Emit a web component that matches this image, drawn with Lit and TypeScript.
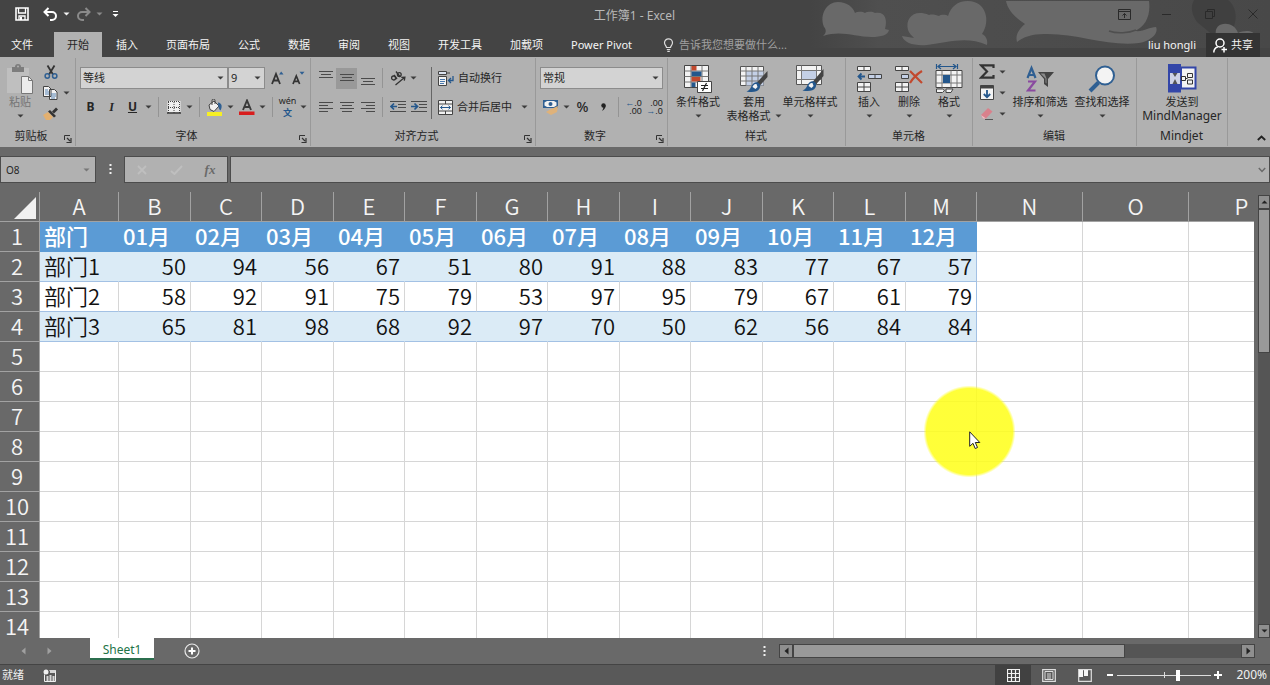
import { LitElement, html, svg, css, nothing, TemplateResult, SVGTemplateResult } from "lit";
import { customElement, state } from "lit/decorators.js";
import { classMap } from "lit/directives/class-map.js";
import { styleMap } from "lit/directives/style-map.js";

const icon = (w: number, h: number, body: SVGTemplateResult, cls = "") =>
  html`<svg class=${cls} width=${w} height=${h} viewBox="0 0 ${w} ${h}" aria-hidden="true">${body}</svg>`;

const caret = (cls = "") => icon(7, 4, svg`<path d="M0.5 0.5h6L3.5 3.6z" fill="currentColor"/>`, cls);

const lines = (spec: number[][], color = "#4a4a4a") =>
  svg`<g stroke=${color} stroke-width="1">${spec.map(
    ([x1, x2, y]) => svg`<path d="M${x1} ${y + 0.5}H${x2}"/>`
  )}</g>`;

const I = {
  save: icon(14, 14, svg`<path d="M1 1h12v12H1z" fill="none" stroke="#fff" stroke-width="1.6"/><path d="M3.5 1v5h7V1M4 13V9h6v4" fill="none" stroke="#fff" stroke-width="1.3"/><path d="M5 10h2v3H5z" fill="#fff"/>`),
  undo: icon(15, 14, svg`<path d="M5.5 1L1.5 5l4 4M2 5h7a4 4 0 0 1 0 8H7" fill="none" stroke="#fff" stroke-width="2"/>`),
  redo: icon(15, 14, svg`<path d="M9.500 1l4 4-4 4M13 5H6a4 4 0 0 0 0 8h2" fill="none" stroke="#8a8a8a" stroke-width="2"/>`),
  customize: icon(7, 8, svg`<path d="M1 1.500h5" stroke="#fff"/><path d="M0.500 4h6l-3 3z" fill="#fff"/>`),
  ribbonOpts: icon(13, 11, svg`<path d="M.5.5h12v10H.5zM.5 2.500h12" fill="none" stroke="#2a2a2a"/><path d="M6.500 9V4.500M4.500 6.500l2-2 2 2" fill="none" stroke="#2a2a2a"/>`),
  min: icon(10, 10, svg`<path d="M0 5.500h9" stroke="#2a2a2a"/>`),
  restore: icon(10, 10, svg`<path d="M.5 2.500h7v7h-7zM2.500 2.500v-2h7v7h-2" fill="none" stroke="#2a2a2a"/>`),
  close: icon(10, 10, svg`<path d="M.5.5l9 9M9.500.5l-9 9" stroke="#2a2a2a"/>`),
  bulb: icon(11, 14, svg`<path d="M3.500 9.500C3.500 8 1.500 7 1.500 4.800a4 4 0 0 1 8 0C9.500 7 7.500 8 7.500 9.500zM3.800 11.500h3.500M4.300 13.300h2.500" fill="none" stroke="#ddd" stroke-width="1.200"/>`),
  person: icon(14, 15, svg`<circle cx="7" cy="5" r="4" fill="none" stroke="#fff" stroke-width="1.500"/><path d="M.8 14.500c0-3 1.500-5 4-5.600M8.500 11.500h5.500M11 9v5.500" fill="none" stroke="#fff" stroke-width="1.500"/>`),
  paste: icon(28, 32, svg`<path d="M1 5h22v25H1z" fill="#bfbfbf"/><path d="M6 4h3a3 3 0 0 1 6 0h3v5H6z" fill="#7d7d7d"/><circle cx="12" cy="3.500" r="1" fill="#b1b1b1"/><path d="M15.500 13.500h7l4 4v13h-11z" fill="#ececec" stroke="#777"/><path d="M22.500 13.500v4h4" fill="none" stroke="#777"/>`),
  cut: icon(14, 14, svg`<path d="M3.500.5l5.500 9M10.500.5L5 9.500" stroke="#333" stroke-width="1.800"/><circle cx="3.300" cy="11" r="2.200" fill="none" stroke="#2f5f92" stroke-width="1.500"/><circle cx="10.700" cy="11" r="2.200" fill="none" stroke="#2f5f92" stroke-width="1.500"/>`),
  copy: icon(15, 14, svg`<path d="M.5.5h5l2.500 2.500v7.500H.5zM6.500 3.500h5l2.500 2.500v7.500H6.500z" fill="#f3f3f3" stroke="#444"/><path d="M2 4h3M2 6h4M2 8h4M8 8h5M8 10h5M8 12h4" stroke="#4878ad" stroke-width=".9"/>`),
  brush: icon(15, 13, svg`<path d="M0 8l5-3 5 5-3 3H3z" fill="#e3b070"/><path d="M5 4.500l2-1.500 6 6-2 1.500z" fill="#333"/><path d="M9 4.500L13 .5l2 2-4 4z" fill="#333"/>`),
  growA: icon(13, 14, svg`<path d="M1 13L5 3l4 10M2.400 9.500h5.200" fill="none" stroke="#333" stroke-width="1.800"/><path d="M8 3.500l2.200-3 2.300 3z" fill="#2f5f92"/>`),
  shrinkA: icon(13, 14, svg`<path d="M1 13l3.300-8L7.600 13M2.200 10.300h4.200" fill="none" stroke="#333" stroke-width="1.700"/><path d="M7.500.8h5l-2.500 3z" fill="#2f5f92"/>`),
  borders: icon(14, 13, svg`<path d="M.5 0h13v12.500H.5z" fill="#efefef"/><path d="M1 .5h12M1 6.500h12M1.500 1v11M7 1v11M12.500 1v11" stroke="#444" stroke-dasharray="1 1" fill="none"/><path d="M0 12h14" stroke="#333" stroke-width="1.500"/>`),
  fill: icon(17, 17, svg`<path d="M3 6l5-4 5 5-5 5.500-4-2z" fill="#f1f1f1" stroke="#444"/><path d="M6 6V1.500a1.500 1.500 0 0 1 3 0V5" fill="none" stroke="#444"/><path d="M12 3.500c4 .5 4.500 4 2.500 8-1.500-1-2.500-4-2.500-8z" fill="#2f5f92"/><path d="M1 13h15v4H1z" fill="#f6ef24"/>`),
  fontColor: icon(16, 16, svg`<path d="M4 11L8 1.500 12 11M5.400 8h5.200" fill="none" stroke="#3a3a3a" stroke-width="1.900"/><path d="M0 12.500h15.500v3.500H0z" fill="#d81e1e"/>`),
  aTop: icon(14, 14, lines([[0, 14, 0], [2, 12, 3], [0, 14, 6]])),
  aMid: icon(14, 14, lines([[0, 14, 3], [2, 12, 6], [0, 14, 9]])),
  aBot: icon(14, 14, lines([[0, 14, 7], [2, 12, 10], [0, 14, 13]])),
  aLeft: icon(14, 12, lines([[0, 14, 1], [0, 9, 4], [0, 14, 7], [0, 9, 10]])),
  aCenter: icon(14, 12, lines([[0, 14, 1], [2, 12, 4], [0, 14, 7], [2, 12, 10]])),
  aRight: icon(14, 12, lines([[0, 14, 1], [5, 14, 4], [0, 14, 7], [5, 14, 10]])),
  orient: icon(16, 15, svg`<g fill="none" stroke="#333" stroke-width="1.300"><circle cx="3.600" cy="7" r="2"/><path d="M4 4l3 4M6 .5l4.200 5.500"/><circle cx="9.300" cy="3.500" r="1.900"/><path d="M5.500 14l9-7.500M11.300 6.300l3.600-.2-.6 3.600"/></g>`),
  outdent: icon(16, 12, svg`${lines([[0, 16, 0], [8, 16, 3], [8, 16, 6], [0, 16, 10]])}<path d="M7 5.500H1.500M4 2.500L1 5.500l3 3" fill="none" stroke="#24578c" stroke-width="1.700"/>`),
  indent: icon(16, 12, svg`${lines([[0, 16, 0], [8, 16, 3], [8, 16, 6], [0, 16, 10]])}<path d="M0 5.500h5.500M3.500 2.500l3 3-3 3" fill="none" stroke="#24578c" stroke-width="1.700"/>`),
  wrap: icon(16, 15, svg`<path d="M.5.5h8v3h-8z" fill="#dbe3f0" stroke="#444"/><path d="M9 2h3" stroke="#444"/><path d="M.5 5.500h8v9h-8z" fill="#f3f3f3" stroke="#444"/><path d="M2 8.500h5M2 10.500h5M2 12.500h4" stroke="#4878ad"/><path d="M15 5v4.500h-4M13 7l-2.500 2.500L13 12" fill="none" stroke="#24578c" stroke-width="1.300"/>`),
  merge: icon(15, 15, svg`<path d="M.5.5h14v14H.5z" fill="#f3f3f3" stroke="#444"/><path d="M.5 4h14M.5 11h14M7.500.5V4M7.500 11v3.500" fill="none" stroke="#444"/><path d="M2.500 7.500h10M4.500 5.700L2.500 7.500l2 1.800M10.500 5.700l2 1.800-2 1.800" fill="none" stroke="#24578c"/>`),
  money: icon(16, 16, svg`<path d="M0 1h15v8H0z" fill="#2f5f92"/><path d="M1.500 3.500L4 2h7l2.500 1.500v3L11 8H4L1.500 6.500z" fill="#f1f1f1"/><circle cx="7.500" cy="5" r="2" fill="#2f5f92"/><path d="M3 13l5-3 7-3-1 6-6 3z" fill="#dfb27a"/>`),
  cond: icon(28, 28, svg`<path d="M.5.5h24v22H.5z" fill="#f3f3f3" stroke="#444"/><path d="M.5 6h24M.5 11.500h24M.5 17h24M7 .5v22M18 .5v22" stroke="#777"/><path d="M7.500 1h5v4.500h-5zM7.500 12h9v4.500h-9z" fill="#c2492e"/><path d="M7.500 6.500h10V11h-10zM7.500 17.500h4V22h-4z" fill="#24578c"/><path d="M13.500 16.500h14v11h-14z" fill="#fff" stroke="#444"/><path d="M17 20.500h7M17 23.500h7M22.500 18l-4 8" stroke="#222" stroke-width="1.200"/>`),
  tableFmt: icon(28, 28, svg`<path d="M.5 1.500h23v19H.5z" fill="#f3f3f3" stroke="#555"/><path d="M6 6h17.500v14.500H6z" fill="#c4d0e6"/><path d="M.5 6h23M.5 11h23M.5 16h23M6 1.500v19M12 1.500v19M18 1.500v19" stroke="#777"/><path d="M27.500 6v6l-8 9-3-3z" fill="#444"/><path d="M18 17.500c2 1 3 3 1.500 6-2 4-8 4-13 3 3-1 4-3 5-5.500 1.500-3 4-4.500 6.500-3.500z" fill="#24578c"/><path d="M12.500 22c.5-2 2-3.500 4-3l1 3-2 2z" fill="#f3f3f3"/>`),
  cellStyle: icon(28, 28, svg`<path d="M.5.500h25v19H.5z" fill="#f3f3f3" stroke="#555"/><path d="M.5 5.500h25M.5 14.500h25M5.500.500v19M20.500.500v19" stroke="#777"/><path d="M6 6h14v8H6z" fill="#c4d0e6"/><path d="M27.500 4v7l-8 9-3-3z" fill="#444"/><path d="M18 16.500c2 1 3 3 1.500 6-2 4-8 4-13 3 3-1 4-3 5-5.500 1.500-3 4-4.500 6.500-3.500z" fill="#24578c"/><path d="M12.500 21c.5-2 2-3.500 4-3l1 3-2 2z" fill="#f3f3f3"/>`),
  insert: icon(26, 28, svg`<g stroke="#444" fill="#f3f3f3"><path d="M1.500 1.500h13v4h-13zM8 1.500v4"/><path d="M12.500 9.500h13v4h-13z" fill="#c4d0e6"/><path d="M19 9.500v4"/><path d="M1.500 17.500h13v9h-13zM8 17.500v9M1.500 22h13"/></g><path d="M9 11.500H3M5.500 8.500l-3 3 3 3" fill="none" stroke="#24578c" stroke-width="1.800"/>`),
  del: icon(28, 28, svg`<g stroke="#444" fill="#f3f3f3"><path d="M.5 1.500h13v4H.5zM7 1.500v4"/><path d="M6.500 9.500h7v4h-7z" fill="#c4d0e6"/><path d="M.5 17.500h13v9H.5zM7 17.500v9M.5 22h13"/></g><path d="M15 6l12 12M27 6c-5 3-9 7-12 12" fill="none" stroke="#c2492e" stroke-width="2.200"/>`),
  format: icon(28, 29, svg`<path d="M1.500 0v5M22.500 0v5M3 2.500h18M6 0L3 2.500 6 5M18 0l3 2.500L18 5" fill="none" stroke="#24578c" stroke-width="1.200"/><path d="M1 6.500h26v17H1z" fill="#f3f3f3" stroke="#444"/><path d="M1 11h26M1 19h26M7 6.500v17M16 6.500v17M22 6.500v17" stroke="#777"/><path d="M8 11h7v8H8z" fill="#24578c"/><path d="M1.500 25h6l2 1.500-2 2h-6zM11 25h7l-2 3.500h-5z" fill="#f3f3f3" stroke="#444"/>`),
  sigma: icon(16, 15, svg`<path d="M14.500 4V1.300H2L8 7.500 2 13.700h12.500V11" fill="none" stroke="#333" stroke-width="2.200"/>`),
  fillDown: icon(14, 15, svg`<path d="M.5.500h13v14H.5z" fill="#f3f3f3" stroke="#444"/><path d="M.5.500h13v3H.5z" fill="#444"/><path d="M7 5v7M3.800 9L7 12.200 10.200 9" fill="none" stroke="#24578c" stroke-width="1.800"/>`),
  eraser: icon(14, 14, svg`<path d="M1 8L8 1l4.500 3.500L6 11.500H3z" fill="#d9818c"/><path d="M1 8l5 3.500H3z" fill="#ecc0c4"/><path d="M5 12.500h8" stroke="#555"/>`),
  sort: icon(28, 28, svg`<g fill="none" stroke-width="2.200"><path d="M1.500 13L5.500 3l4 10M3 10h5" stroke="#2f5f92"/><path d="M2 16.500h7L2 25.500h7.500" stroke="#8a4aa0"/></g><path d="M12 7h16l-6 7v8l-4-3v-5z" fill="#444"/><path d="M14.500 8.500h4l2 5v5l-1-1v-4z" fill="#8a8a8a"/>`),
  find: icon(28, 28, svg`<circle cx="17" cy="10.500" r="9" fill="#f3f3f3" stroke="#2f5f92" stroke-width="2"/><path d="M10.500 17.500L2 26" stroke="#2f5f92" stroke-width="4"/>`),
  mind: icon(30, 29, svg`<path d="M14 3.500h14.500v21H14z" fill="#f3f3f3" stroke="#3346a8" stroke-width="2"/><path d="M1 0h13v28.500H1z" fill="#3346a8"/><path d="M3 9h10v11H3z" fill="#cfd3e6"/><path d="M5.500 9l2.500 4 2.500-4zM5.500 20l2.500-5 2.500 5z" fill="#555"/><g fill="none" stroke="#333"><path d="M14.500 12.500h4v4h-4zM20.500 9.500h5v4h-5zM20.500 16h5v4h-5zM18.500 14.500h2"/></g>`),
  launcher: icon(8, 8, svg`<path d="M.5 5V.5H6" fill="none" stroke="#333"/><path d="M3 3l3 3M7 3v4.500H2.500" fill="none" stroke="#333" stroke-width="1.200"/>`),
  up: icon(9, 6, svg`<path d="M.8 5l3.700-3.500L8.200 5" fill="none" stroke="#222" stroke-width="1.800"/>`),
  down: icon(8, 6, svg`<path d="M.8 1L4 4.500 7.200 1" fill="none" stroke="#6a6a6a" stroke-width="1.500"/>`),
  cancel: icon(10, 10, svg`<path d="M1 1l8 8M9 1L1 9" stroke="#bfbfbf" stroke-width="1.800"/>`),
  check: icon(13, 10, svg`<path d="M1 6l3.500 3L12 1" fill="none" stroke="#bfbfbf" stroke-width="1.900"/>`),
  dots: icon(3, 11, svg`<path d="M.5 0h2v2h-2zM.5 4h2v2h-2zM.5 8h2v2h-2z" fill="#f1f1f1"/>`),
  triL: icon(5, 8, svg`<path d="M4.500.5v7L.5 4z" fill="currentColor"/>`),
  triR: icon(5, 8, svg`<path d="M.5.500v7l4-3.500z" fill="currentColor"/>`),
  triU: icon(7, 4, svg`<path d="M.5 3.600h6L3.500.4z" fill="currentColor"/>`),
  add: icon(16, 16, svg`<circle cx="8" cy="8" r="7" fill="none" stroke="#e8e8e8" stroke-width="1.200"/><path d="M4.500 8h7M8 4.500v7" stroke="#fff" stroke-width="2"/>`),
  macro: icon(13, 13, svg`<path d="M1.500 5.500v7h11v-11h-6" fill="none" stroke="#f1f1f1"/><circle cx="3" cy="3" r="2.500" fill="#f1f1f1"/><path d="M7 1h5.500v3H7zM3.500 7h2v5h-2zM6.500 6h2v6h-2zM9.500 7h2v5h-2z" fill="#d5d5d5"/>`),
  vNormal: icon(13, 13, svg`<path d="M.5.500h12v12H.5zM.5 4.500h12M.5 8.500h12M4.500.5v12M8.500.5v12" fill="none" stroke="#f1f1f1" stroke-width="1.200"/>`),
  vPage: icon(14, 13, svg`<path d="M.7.7h12.600v11.600H.7z" fill="none" stroke="#ddd" stroke-width="1.200"/><path d="M3 2.500h8v8H3zM5 5h4M5 7h4M5 9h4" fill="none" stroke="#ddd"/>`),
  vBreak: icon(14, 13, svg`<path d="M.7.7h12.600v11.600H.7z" fill="none" stroke="#ddd" stroke-width="1.200"/><path d="M1 1h4v7H1zM6 1h4v6H6z" fill="#f6f6f6"/>`),
};

const TABS = ["文件", "开始", "插入", "页面布局", "公式", "数据", "审阅", "视图", "开发工具", "加载项", "Power Pivot"];
const COLS = "ABCDEFGHIJKLMNOP".split("");
const HEAD = ["部门", ...Array.from({ length: 12 }, (_, i) => `${String(i + 1).padStart(2, "0")}月`)];
const DATA: (string | number)[][] = [
  ["部门1", 50, 94, 56, 67, 51, 80, 91, 88, 83, 77, 67, 57],
  ["部门2", 58, 92, 91, 75, 79, 53, 97, 95, 79, 67, 61, 79],
  ["部门3", 65, 81, 98, 68, 92, 97, 70, 50, 62, 56, 84, 84],
];
const colWidth = (i: number) => (i === 0 ? 79 : i > 12 ? 106 : i % 2 ? 72 : 71);

@customElement("sheet-grid")
class SheetGrid extends LitElement {
  static styles = css`
    :host { display: block; overflow: hidden; background: #fff; font-family: "Noto Sans CJK SC", sans-serif; }
    table { table-layout: fixed; width: 0; border-collapse: separate; border-spacing: 0; font-size: 22px; line-height: 26px; color: #111; }
    th, td { box-sizing: border-box; height: 30px; padding: 0 4px 3px; white-space: nowrap; border-right: 1px solid #d6d6d6; border-bottom: 1px solid #d6d6d6; font-weight: 350; }
    .head { background: #696969; color: #f4f4f4; border-color: #a2a2a2; text-align: center; }
    .rowhead { padding: 0 5px 3px 0; }
    .corner { padding: 0 3px 1px 0; line-height: 0; vertical-align: bottom; }
    .corner svg { display: block; margin-left: auto; }
    .title { background: #5b9bd5; border-color: #5b9bd5; color: #fff; font-weight: 500; text-align: left; }
    .num { text-align: right; }
    .data { border-bottom-color: #a3c1e4; }
    .band { background: #dbebf6; border-right-color: #dbebf6; }
    .data.last { border-right-color: #a3c1e4; }
  `;
  private cell(r: number, c: number) {
    if (c > 12 || r > 3) return html`<td></td>`;
    if (r === 0) return html`<th class="title" scope="col">${HEAD[c]}</th>`;
    return html`<td class=${classMap({ data: true, band: r % 2 === 1, num: c > 0, last: c === 12 })}>${DATA[r - 1][c]}</td>`;
  }
  render() {
    return html`<table aria-label="Sheet1">
      <colgroup>
        <col style="width:40px" />
        ${COLS.map((_, i) => html`<col style=${styleMap({ width: `${colWidth(i)}px` })} />`)}
      </colgroup>
      <thead>
        <tr>
          <th class="head corner">${icon(22, 23, svg`<path d="M22 0v22H0z" fill="#f1f1f1"/>`)}</th>
          ${COLS.map((c) => html`<th class="head" scope="col">${c}</th>`)}
        </tr>
      </thead>
      <tbody>
        ${Array.from({ length: 14 }, (_, r) => html`<tr>
          <th class="head rowhead" scope="row">${r + 1}</th>
          ${COLS.map((_, c) => this.cell(r, c))}
        </tr>`)}
      </tbody>
    </table>`;
  }
}

@customElement("app-root")
class AppRoot extends LitElement {
  @state() private active = 1;

  static styles = css`
    :host { display: flex; flex-direction: column; height: 100vh; overflow: hidden; background: #696969; font: 11px/14px "Noto Sans", "Noto Sans CJK SC", sans-serif; color: #262626; }
    * { box-sizing: border-box; }
    svg { display: block; flex: none; }
    button, input, select { font: inherit; color: inherit; margin: 0; padding: 0; border: 0; border-radius: 0; background: none; outline: none; }
    button { display: flex; align-items: center; justify-content: center; white-space: nowrap; }
    .latin { font-size: 12px; }

    .top { position: relative; background: #444; color: #f4f4f4; }
    .clouds { position: absolute; top: 0; right: 0; }
    .titlebar { position: relative; display: grid; grid-template-columns: 1fr auto 1fr; align-items: center; height: 32px; padding: 0 9px 4px 12px; }
    .quick { display: flex; align-items: center; }
    .quick .tool { width: 20px; height: 24px; }
    .quick .drop { width: 13px; height: 24px; }
    .quick .save { margin-right: 8px; }
    .quick .more { width: 18px; height: 28px; }
    .dim { color: #8a8a8a; }
    .title { padding: 4px 4px 0 0; font-size: 12px; color: #b9b9b9; }
    .win { display: flex; justify-content: flex-end; gap: 27px; }
    .win button { width: 16px; height: 24px; }
    .tabs { position: relative; display: flex; height: 25px; }
    .tab { padding: 0 14px; }
    .tab:first-child { padding: 0 21px 0 11px; }
    .tab.on { background: #b1b1b1; color: #262626; padding: 0 13px; }
    .tell { display: flex; align-items: center; flex: 1; gap: 5px; margin-left: 17px; }
    .tell input { width: 160px; }
    .tell input::placeholder { color: #a0a0a0; opacity: 1; }
    .user { padding: 0 10px; }
    .share { gap: 4px; margin: 1px 10px 0 0; padding: 0 7px; background: #333; }

    .ribbon { display: flex; height: 90px; padding: 1px 0 1px; background: #b1b1b1; }
    .ribbon svg { color: #3c3c3c; }
    .group { display: flex; flex-direction: column; border-right: 1px solid #999; flex: none; }
    .body { flex: 1; display: flex; }
    .foot { display: flex; align-items: center; height: 20px; padding-right: 1px; }
    .foot span { flex: 1; text-align: center; }
    .foot button { width: 12px; height: 14px; align-items: end; }
    .g-clip { width: 76px; } .g-font { width: 235px; } .g-align { width: 225px; } .g-num { width: 132px; }
    .g-style { width: 178px; } .g-cell { width: 127px; } .g-edit { width: 164px; } .g-mind { width: 91px; }
    .rows { display: flex; flex-direction: column; gap: 5px; padding: 8px 0 0 4px; }
    .plain { padding-left: 0; }
    .row { display: flex; align-items: center; height: 24px; }
    .b { width: 21px; height: 21px; flex: none; }
    .b.on { background: #999; }
    .d { width: 11px; height: 21px; flex: none; }
    .sep { width: 1px; height: 20px; margin: 0 4px; background: #949494; flex: none; }
    .tall { width: 1px; height: 52px; margin: 9px 6px 0 2px; background: #666; }
    .stack { display: flex; flex-direction: column; padding-top: 3px; }
    .line { display: flex; height: 21px; }
    .big { flex-direction: column; justify-content: flex-start; padding-top: 4px; height: 68px; flex: none; }
    .big .pic { height: 33px; display: flex; align-items: center; }
    .big .cap { height: 14px; font-size: 11px; }
    .big .sub { height: 14px; display: flex; align-items: center; gap: 4px; }
    .grey { color: #757575; }
    .w40 { width: 40px; } .w60 { width: 60px; } .w90 { width: 90px; } .w52 { width: 52px; }
    .pad { padding-left: 3px; }
    .spread { gap: 2px; }
    .bold { font: 700 12px/14px "Noto Sans", sans-serif; }
    .ital { font: italic 700 12px/14px "Liberation Serif", serif; }
    .under { font: 700 12px/14px "Noto Sans", sans-serif; text-decoration: underline; }
    .pct { font: 500 14px/14px "Noto Sans", sans-serif; }
    .wen { display: flex; flex-direction: column; align-items: center; font-size: 9px; line-height: 12px; }
    .wen b { color: #24578c; }
    .dec { font: 9px/8px "Liberation Sans", sans-serif; text-align: right; color: #222; }
    .dec i { color: #24578c; font-style: normal; }
    .text { gap: 4px; height: 21px; }
    .after { margin-left: 7px; }
    .pick { display: grid; align-items: center; height: 22px; background: #d3d3d3; border: 1px solid #8c8c8c; }
    .pick select, .pick svg { grid-area: 1 / 1; }
    .pick select { appearance: none; width: 100%; height: 20px; padding-left: 2px; }
    .pick svg { justify-self: end; margin-right: 3px; pointer-events: none; }
    .p-font { width: 148px; } .p-size { width: 37px; margin-right: 2px; } .p-num { width: 123px; }
    .fold { flex: 1; display: flex; justify-content: flex-end; align-items: flex-end; padding: 0 4px 5px; }

    .formula { display: flex; align-items: stretch; height: 45px; padding: 9px 0; }
    .box { display: flex; align-items: center; background: #b1b1b1; border: 1px solid #4c4c4c; }
    .namebox { width: 96px; padding: 0 5px; color: #777; }
    .namebox input { flex: 1; min-width: 0; color: #262626; font-size: 10px; }
    .handle { display: flex; align-items: center; justify-content: center; width: 28px; }
    .acts { width: 104px; }
    .acts button { flex: 1; height: 24px; }
    .fx { font: italic 700 13px/16px "Liberation Serif", serif; color: #6a6a6a; }
    .entry { flex: 1; margin-left: 2px; padding-right: 3px; }
    .entry input { flex: 1; height: 24px; padding: 0 6px; }

    .work { position: relative; flex: 1; min-height: 0; display: flex; }
    sheet-grid { flex: 1; min-width: 0; }
    .spot { position: absolute; left: 924px; top: 194px; width: 91px; height: 91px; background: radial-gradient(circle, rgba(255, 255, 24, 0.86) 0 43px, rgba(255, 255, 24, 0) 46px); pointer-events: none; }
    .pointer { position: absolute; left: 969px; top: 239px; }
    .vbar { width: 16px; display: flex; flex-direction: column; padding: 3px 0 0 4px; background: #696969; }
    .vbar button, .hbar button { background: #8f8f8f; border: 1px solid #444; width: 14px; height: 14px; flex: none; color: #222; }
    .vbar button { width: 12px; }
    .vtrack { flex: 1; background: #555; }
    .vthumb { height: 144px; background: #999; border: 1px solid #444; }

    .sheets { display: flex; align-items: center; height: 26px; padding-right: 15px; color: #a0a0a0; }
    .sheets .nav { width: 26px; height: 20px; }
    .sheets .nav:first-child { margin-left: 10px; }
    .sheet { align-self: flex-start; width: 64px; height: 22px; margin: 0 30px 0 28px; padding-top: 3px; background: #fff; color: #217346; border-bottom: 2px solid #2b6e4e; font-size: 12px; }
    .space { flex: 1; }
    .hbar { display: flex; width: 476px; height: 14px; margin-left: 13px; }
    .htrack { flex: 1; background: #555; }
    .hthumb { width: 74%; height: 14px; background: #999; border: 1px solid #444; }

    .status { display: flex; align-items: center; height: 21px; background: #595959; border-top: 1px solid #444; color: #f1f1f1; padding: 0 3px 0 2px; }
    .status .mac { margin-left: 15px; width: 20px; }
    .views { display: flex; }
    .views button { width: 36px; height: 20px; }
    .views .on { background: #414141; }
    .zoom { display: flex; align-items: center; }
    .zoom button { width: 14px; height: 20px; }
    .zoom input { appearance: none; width: 94px; height: 12px; background: linear-gradient(#ddd, #ddd) 47px 3px / 1px 6px no-repeat, linear-gradient(#ddd, #ddd) 0 6px / 100% 1px no-repeat; }
    .zoom input::-webkit-slider-thumb { appearance: none; width: 4px; height: 11px; background: #fff; }
    .level { width: 42px; text-align: right; }
  `;

  private small(label: string, body: unknown, cls = "") {
    return html`<button class="b ${cls}" aria-label=${label}>${body}</button>`;
  }
  private drop(label: string, cls = "d") {
    return html`<button class=${cls} aria-label=${label}>${caret()}</button>`;
  }
  private big(pic: TemplateResult, cap: string, width: string, sub: unknown = "", arrow = true) {
    return html`<button class="big ${width}"><span class="pic">${pic}</span><span class="cap">${cap}</span><span class="sub">${sub}${arrow ? caret() : nothing}</span></button>`;
  }
  private group(cls: string, name: string, body: TemplateResult, launch = false) {
    return html`<section class="group ${cls}" aria-label=${name}>
      <div class="body">${body}</div>
      <div class="foot"><span>${name}</span>${launch ? html`<button aria-label="${name}设置">${I.launcher}</button>` : nothing}</div>
    </section>`;
  }
  private pick(cls: string, label: string, options: string[]) {
    return html`<span class="pick ${cls}"><select aria-label=${label}>${options.map((o) => html`<option>${o}</option>`)}</select>${caret()}</span>`;
  }

  private header() {
    return html`<header class="top">
      <svg class="clouds" width="460" height="57" viewBox="0 0 460 57" aria-hidden="true">
        <defs><linearGradient id="shade"><stop offset="0" stop-color="#4d4d4d" stop-opacity="0"/><stop offset=".15" stop-color="#4f4f4f"/><stop offset="1" stop-color="#484848"/></linearGradient></defs>
        <path d="M0 0h460v48H0z" fill="url(#shade)"/>
        <path d="M384 0h34c10 8 9 22 4 30l-18 6-17-14c-5-7-7-15-3-22z" fill="#404040"/>
        <g fill="#696969">
          <path d="M13 36c4-3 3-7 1-9C9 14 17 2 28 2c9 0 15 5 17 11 4-2 8-1 10 0 4-2 8-1 10 0 9-2 13 5 10 16l4 1c-1 5-8 7-17 7-18 0-30-7-49-1z"/>
          <path d="M177 45c1-5-1-9-5-11 9-13 4-33-14-33-11 0-17 6-20 15-3-2-8-1-9 0-3-1-7-2-10-1C104 9 95 18 98 30c1 3 4 6 6 8l-12-2c2 7 12 10 25 9 22-3 40-9 60 0z"/>
          <path d="M196 1h143c2 15-4 26-14 30 9 1 14-4 21-4 3 6-5 14-17 16-30 4-62-10-95-9-12 0-21 3-27 8-2-7 2-13 8-18-9-6-17-13-19-23z"/>
          <path d="M406 35c-3-14 18-15 22-2 7-3 16-3 18 4l-8 6h-28z"/>
        </g>
        <path d="M299 31c8 3 20 2 27-1" fill="none" stroke="#4f4f4f" stroke-width="1.500"/>
      </svg>
      <div class="titlebar">
        <div class="quick">
          <button class="tool save" aria-label="保存">${I.save}</button>
          <button class="tool" aria-label="撤消">${I.undo}</button>${this.drop("撤消选项", "drop")}
          <button class="tool dim" aria-label="恢复">${I.redo}</button>${this.drop("恢复选项", "drop dim")}
          <button class="more" aria-label="自定义快速访问工具栏">${I.customize}</button>
        </div>
        <div class="title">工作簿1 - Excel</div>
        <div class="win">
          <button aria-label="功能区显示选项">${I.ribbonOpts}</button><button aria-label="最小化">${I.min}</button>
          <button aria-label="还原">${I.restore}</button><button aria-label="关闭">${I.close}</button>
        </div>
      </div>
      <nav class="tabs">
        ${TABS.map((t, i) => html`<button class="tab ${i === this.active ? "on" : ""}" @click=${() => (this.active = i)}>${t}</button>`)}
        <label class="tell">${I.bulb}<input aria-label="告诉我您想要做什么" placeholder="告诉我您想要做什么..." /></label>
        <button class="user">liu hongli</button>
        <button class="share">${I.person}共享</button>
      </nav>
    </header>`;
  }

  private ribbon() {
    return html`<div class="ribbon">
      ${this.group("g-clip", "剪贴板", html`
        <button class="big w40 grey"><span class="pic">${I.paste}</span><span class="cap">粘贴</span><span class="sub">${caret()}</span></button>
        <div class="stack">
          <div class="line">${this.small("剪切", I.cut)}</div>
          <div class="line">${this.small("复制", I.copy)}${this.drop("复制选项")}</div>
          <div class="line">${this.small("格式刷", I.brush)}</div>
        </div>`, true)}
      ${this.group("g-font", "字体", html`<div class="rows">
          <div class="row">${this.pick("p-font", "字体", ["等线", "宋体"])}${this.pick("p-size", "字号", ["9", "10", "11"])}${this.small("增大字号", I.growA)}${this.small("减小字号", I.shrinkA)}</div>
          <div class="row">
            ${this.small("加粗", "B", "bold")}${this.small("倾斜", "I", "ital")}${this.small("下划线", "U", "under")}${this.drop("下划线选项")}
            <i class="sep"></i>${this.small("边框", I.borders)}${this.drop("边框选项")}
            <i class="sep"></i>${this.small("填充颜色", I.fill)}${this.drop("填充选项")}${this.small("字体颜色", I.fontColor)}${this.drop("颜色选项")}
            <i class="sep"></i>${this.small("拼音", html`<span class="wen">wén<b>文</b></span>`)}${this.drop("拼音选项")}
          </div>
        </div>`, true)}
      ${this.group("g-align", "对齐方式", html`
        <div class="rows">
          <div class="row">${this.small("顶端对齐", I.aTop)}${this.small("垂直居中", I.aMid, "on")}${this.small("底端对齐", I.aBot)}<i class="sep"></i>${this.small("方向", I.orient)}${this.drop("方向选项")}</div>
          <div class="row">${this.small("左对齐", I.aLeft)}${this.small("居中", I.aCenter)}${this.small("右对齐", I.aRight)}<i class="sep"></i>${this.small("减少缩进", I.outdent)}${this.small("增加缩进", I.indent)}</div>
        </div>
        <i class="tall"></i>
        <div class="rows plain">
          <div class="row"><button class="text">${I.wrap}自动换行</button></div>
          <div class="row"><button class="text">${I.merge}合并后居中</button>${this.drop("合并选项", "d after")}</div>
        </div>`, true)}
      ${this.group("g-num", "数字", html`<div class="rows">
          <div class="row">${this.pick("p-num", "数字格式", ["常规", "数值"])}</div>
          <div class="row">${this.small("会计数字格式", I.money)}${this.drop("货币选项")}${this.small("百分比", "%", "pct")}${this.small("千位分隔", icon(5, 9, svg`<circle cx="2.500" cy="2.500" r="2.200" fill="#222"/><path d="M4.700 2.500C4.700 5 3 7 1 8c1-2 1.500-3 1.500-4.500z" fill="#222"/>`))}
            <i class="sep"></i>${this.small("增加小数位", html`<span class="dec"><i>←</i>.0<br />.00</span>`)}${this.small("减少小数位", html`<span class="dec">.00<br /><i>→</i>.0</span>`)}</div>
        </div>`, true)}
      ${this.group("g-style", "样式", html`${this.big(I.cond, "条件格式", "w60")}${this.big(I.tableFmt, "套用", "w52", "表格格式")}${this.big(I.cellStyle, "单元格样式", "w60")}`)}
      ${this.group("g-cell", "单元格", html`<div class="body pad">${this.big(I.insert, "插入", "w40")}${this.big(I.del, "删除", "w40")}${this.big(I.format, "格式", "w40")}</div>`)}
      ${this.group("g-edit", "编辑", html`<div class="body pad spread">
          <div class="stack">
            <div class="line">${this.small("自动求和", I.sigma)}${this.drop("求和选项")}</div>
            <div class="line">${this.small("填充", I.fillDown)}${this.drop("填充方向")}</div>
            <div class="line">${this.small("清除", I.eraser)}${this.drop("清除选项")}</div>
          </div>
          ${this.big(I.sort, "排序和筛选", "w60")}${this.big(I.find, "查找和选择", "w60")}</div>`)}
      ${this.group("g-mind latin", "Mindjet", this.big(I.mind, "发送到", "w90", "MindManager", false))}
      <div class="fold"><button aria-label="折叠功能区">${I.up}</button></div>
    </div>`;
  }

  render() {
    return html`${this.header()}${this.ribbon()}
      <div class="formula">
        <label class="box namebox"><input aria-label="名称框" value="O8" />${caret()}</label>
        <span class="handle">${I.dots}</span>
        <div class="box acts"><button aria-label="取消">${I.cancel}</button><button aria-label="输入">${I.check}</button><button class="fx" aria-label="插入函数">fx</button></div>
        <label class="box entry"><input aria-label="编辑栏" />${I.down}</label>
      </div>
      <main class="work">
        <sheet-grid></sheet-grid>
        <div class="vbar"><button aria-label="向上滚动">${I.triU}</button><div class="vtrack"><div class="vthumb"></div></div><button aria-label="向下滚动">${caret()}</button></div>
        <div class="spot"></div>
        ${icon(13, 19, svg`<path d="M.7.8v14.500l3.300-3 2.200 5.200 2.300-1-2.200-5h4.500z" fill="#fff" stroke="#222"/>`, "pointer")}
      </main>
      <div class="sheets">
        <button class="nav" aria-label="上一个工作表">${I.triL}</button><button class="nav" aria-label="下一个工作表">${I.triR}</button>
        <button class="sheet">Sheet1</button>
        <button aria-label="新工作表">${I.add}</button>
        <span class="space"></span>${I.dots}
        <div class="hbar"><button aria-label="向左滚动">${I.triL}</button><div class="htrack"><div class="hthumb"></div></div><button aria-label="向右滚动">${I.triR}</button></div>
      </div>
      <footer class="status">
        <span>就绪</span><button class="mac" aria-label="录制宏">${I.macro}</button><span class="space"></span>
        <div class="views"><button class="on" aria-label="普通">${I.vNormal}</button><button aria-label="页面布局">${I.vPage}</button><button aria-label="分页预览">${I.vBreak}</button></div>
        <div class="zoom"><button aria-label="缩小">${icon(6, 2, svg`<path d="M0 0h6v2H0z" fill="#fff"/>`)}</button><input type="range" aria-label="缩放" min="0" max="100" value="66" /><button aria-label="放大">${icon(8, 8, svg`<path d="M4 0v8M0 4h8" stroke="#fff" stroke-width="2"/>`)}</button></div>
        <span class="level latin">200%</span>
      </footer>`;
  }
}
